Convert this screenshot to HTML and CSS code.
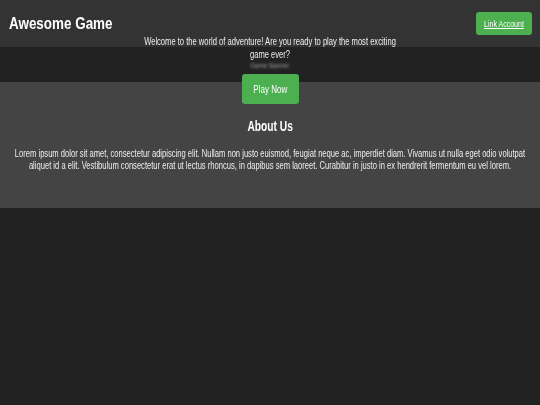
FILE: index.html
```html
<!DOCTYPE html>
<html lang="en">
<head>
<meta charset="utf-8">
<title>Awesome Game</title>
<link rel="stylesheet" href="styles.css">
</head>
<body>
<header class="site-header">
  <h1 class="logo">Awesome Game</h1>
  <a class="btn btn-small" href="#"><span class="btn-label">Link Account</span></a>
</header>
<section class="hero">
  <p class="hero-text">Welcome to the world of adventure! Are you ready to play the most exciting game ever?</p>
  <span class="banner">Game Banner</span>
  <a class="btn btn-play" href="#"><span class="btn-label">Play Now</span></a>
</section>
<section class="about">
  <h2 class="about-title">About Us</h2>
  <p class="about-text">Lorem ipsum dolor sit amet, consectetur adipiscing elit. Nullam non justo euismod, feugiat neque ac, imperdiet diam. Vivamus ut nulla eget odio volutpat aliquet id a elit. Vestibulum consectetur erat ut lectus rhoncus, in dapibus sem laoreet. Curabitur in justo in ex hendrerit fermentum eu vel lorem.</p>
</section>
</body>
</html>
```

FILE: styles.css
```css
* { box-sizing: border-box; }
body {
  margin: 0;
  background: #222;
  color: #fff;
  font-family: "Liberation Sans", Arial, sans-serif;
}
.site-header {
  height: 47px;
  background: #333;
  display: flex;
  align-items: center;
  justify-content: space-between;
  padding: 0 8px 0 9px;
}
.logo {
  margin: 0;
  font-size: 17px;
  font-weight: bold;
  transform: scaleX(0.79);
  transform-origin: left center;
}
.btn {
  display: flex;
  flex: none;
  align-items: center;
  justify-content: center;
  background: #4caf50;
  color: #fff;
  border-radius: 3px;
}
.btn-label {
  display: inline-block;
  white-space: nowrap;
}
.btn-small {
  width: 56px;
  height: 23px;
  font-size: 9.5px;
  text-decoration: underline;
}
.btn-small .btn-label {
  transform: scaleX(0.74);
}
.hero {
  height: 35px;
  padding-top: 10px;
  display: flex;
  flex-direction: column;
  align-items: center;
  justify-content: center;
  text-align: center;
}
.hero > * {
  flex: none;
}
.hero-text {
  margin: 0;
  width: 398px;
  font-size: 11.5px;
  line-height: 13px;
  color: #eee;
  transform: scaleX(0.66);
}
.banner {
  font-size: 7px;
  line-height: 9px;
  color: #999;
  filter: blur(1px);
  margin: 0 0 4px;
  transform: scaleX(0.9);
}
.btn-play {
  width: 57px;
  height: 30px;
  font-size: 11.5px;
  text-decoration: none;
}
.btn-play .btn-label {
  transform: scaleX(0.7);
}
.about {
  background: #444;
  height: 126px;
  padding: 36px 15px 0;
  display: flex;
  flex-direction: column;
  align-items: center;
  text-align: center;
}
.about-title {
  margin: 0 0 14px;
  font-size: 14px;
  transform: scaleX(0.73);
}
.about-text {
  flex: none;
  width: 694px;
  margin: 0;
  font-size: 10px;
  line-height: 12px;
  color: #eee;
  transform: scaleX(0.759);
}
```
